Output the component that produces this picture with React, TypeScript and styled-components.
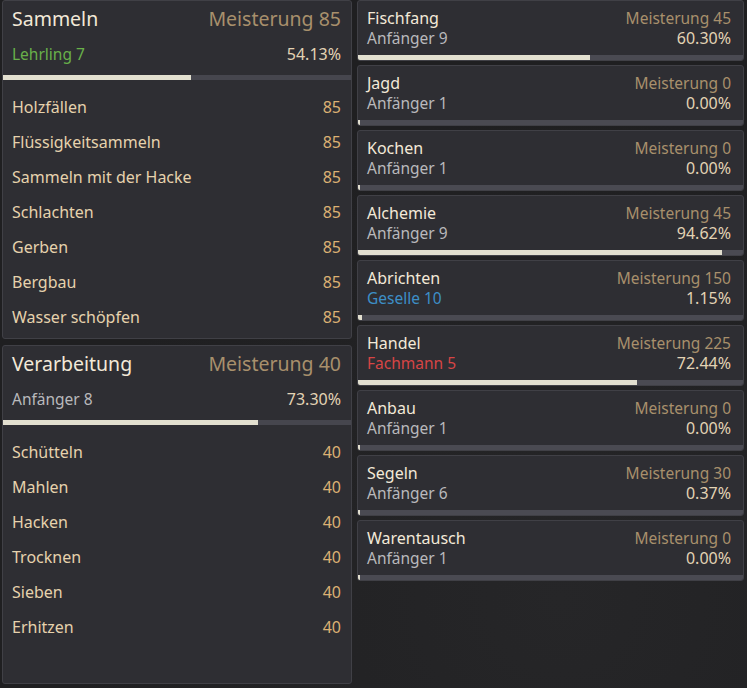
import React from "react";
import styled, { createGlobalStyle } from "styled-components";

const Global = createGlobalStyle`
  html, body { margin: 0; padding: 0; background: #1f1f21; }
  body { font-family: "Noto Sans", "DejaVu Sans", sans-serif; }
`;

const Page = styled.div`
  width: 747px;
  height: 688px;
  box-sizing: border-box;
  padding: 0 3px 0 2px;
  display: flex;
  gap: 5px;
  background: radial-gradient(circle at 560px 600px, #262628 0%, #1f1f21 60%);
  overflow: hidden;
`;

const LeftCol = styled.div`
  width: 350px;
  display: flex;
  flex-direction: column;
  gap: 6px;
`;

const RightCol = styled.div`
  flex: 1;
  display: flex;
  flex-direction: column;
  gap: 4px;
`;

const Panel = styled.div`
  height: 339px;
  box-sizing: border-box;
  background: #2e2e33;
  border: 1px solid #404046;
  border-radius: 3px;
  display: flex;
  flex-direction: column;
`;

const HeadRow = styled.div`
  display: flex;
  justify-content: space-between;
  align-items: center;
  padding: 0 10px 0 9px;
  height: 35px;
`;

const Title = styled.span`
  font-size: 19.5px;
  color: #f3e9d8;
`;

const Mastery = styled.span<{ $size?: number }>`
  font-size: ${(p) => p.$size ?? 19.5}px;
  color: #a8906c;
`;

const SubRow = styled.div`
  display: flex;
  justify-content: space-between;
  align-items: center;
  padding: 0 10px 0 9px;
  height: 35px;
`;

const Rank = styled.span<{ $color: string }>`
  font-size: 15.5px;
  color: ${(p) => p.$color};
`;

const Percent = styled.span`
  font-size: 16px;
  color: #e3d3b4;
`;

const Track = styled.div`
  height: 5px;
  background: #46464e;
  margin-top: 4px;
`;

const Fill = styled.div`
  height: 100%;
  background: #e2dfcf;
`;

const List = styled.div`
  padding-top: 9px;
  display: flex;
  flex-direction: column;
`;

const Item = styled.div`
  height: 35px;
  display: flex;
  justify-content: space-between;
  align-items: center;
  padding: 0 10px 0 9px;
  font-size: 16px;
`;

const ItemName = styled.span`
  color: #e6d2ad;
`;

const ItemValue = styled.span`
  color: #dcb173;
`;

const Card = styled.div`
  height: 61px;
  box-sizing: border-box;
  background: #2e2e33;
  border: 1px solid #404046;
  border-radius: 3px;
  display: flex;
  flex-direction: column;
  overflow: hidden;
`;

const CardBody = styled.div`
  padding: 7px 12px 0 9px;
  display: grid;
  grid-template-columns: 1fr auto;
  grid-auto-rows: 20px;
  align-items: center;
`;

const CardTitle = styled.span`
  font-size: 16px;
  color: #f3e9d8;
`;

const CardRight = styled.span`
  justify-self: end;
`;

const CardTrack = styled.div`
  margin-top: auto;
  height: 5px;
  background: #4a4a52;
`;

const CardFill = styled.div`
  height: 100%;
  min-width: 2px;
  background: #e2dfcf;
`;

const GREY = "#b9b9bc";
const GREEN = "#68b04a";
const BLUE = "#3d8fc7";
const RED = "#d64545";

type Big = {
  title: string;
  mastery: number;
  rank: string;
  rankColor: string;
  pct: number;
  items: [string, number][];
};

const bigPanels: Big[] = [
  {
    title: "Sammeln",
    mastery: 85,
    rank: "Lehrling 7",
    rankColor: GREEN,
    pct: 54.13,
    items: [
      ["Holzfällen", 85],
      ["Flüssigkeitsammeln", 85],
      ["Sammeln mit der Hacke", 85],
      ["Schlachten", 85],
      ["Gerben", 85],
      ["Bergbau", 85],
      ["Wasser schöpfen", 85],
    ],
  },
  {
    title: "Verarbeitung",
    mastery: 40,
    rank: "Anfänger 8",
    rankColor: GREY,
    pct: 73.3,
    items: [
      ["Schütteln", 40],
      ["Mahlen", 40],
      ["Hacken", 40],
      ["Trocknen", 40],
      ["Sieben", 40],
      ["Erhitzen", 40],
    ],
  },
];

type Small = { title: string; mastery: number; rank: string; rankColor: string; pct: number };

const cards: Small[] = [
  { title: "Fischfang", mastery: 45, rank: "Anfänger 9", rankColor: GREY, pct: 60.3 },
  { title: "Jagd", mastery: 0, rank: "Anfänger 1", rankColor: GREY, pct: 0 },
  { title: "Kochen", mastery: 0, rank: "Anfänger 1", rankColor: GREY, pct: 0 },
  { title: "Alchemie", mastery: 45, rank: "Anfänger 9", rankColor: GREY, pct: 94.62 },
  { title: "Abrichten", mastery: 150, rank: "Geselle 10", rankColor: BLUE, pct: 1.15 },
  { title: "Handel", mastery: 225, rank: "Fachmann 5", rankColor: RED, pct: 72.44 },
  { title: "Anbau", mastery: 0, rank: "Anfänger 1", rankColor: GREY, pct: 0 },
  { title: "Segeln", mastery: 30, rank: "Anfänger 6", rankColor: GREY, pct: 0.37 },
  { title: "Warentausch", mastery: 0, rank: "Anfänger 1", rankColor: GREY, pct: 0 },
];

export default function App() {
  return (
    <>
      <Global />
      <Page>
        <LeftCol>
          {bigPanels.map((p) => (
            <Panel key={p.title}>
              <HeadRow>
                <Title>{p.title}</Title>
                <Mastery>Meisterung {p.mastery}</Mastery>
              </HeadRow>
              <SubRow>
                <Rank $color={p.rankColor}>{p.rank}</Rank>
                <Percent>{p.pct.toFixed(2)}%</Percent>
              </SubRow>
              <Track>
                <Fill style={{ width: `${p.pct}%` }} />
              </Track>
              <List>
                {p.items.map(([n, v]) => (
                  <Item key={n}>
                    <ItemName>{n}</ItemName>
                    <ItemValue>{v}</ItemValue>
                  </Item>
                ))}
              </List>
            </Panel>
          ))}
        </LeftCol>
        <RightCol>
          {cards.map((c) => (
            <Card key={c.title}>
              <CardBody>
                <CardTitle>{c.title}</CardTitle>
                <CardRight>
                  <Mastery $size={15.5}>Meisterung {c.mastery}</Mastery>
                </CardRight>
                <Rank $color={c.rankColor}>{c.rank}</Rank>
                <CardRight>
                  <Percent>{c.pct.toFixed(2)}%</Percent>
                </CardRight>
              </CardBody>
              <CardTrack>
                <CardFill style={{ width: `${c.pct}%` }} />
              </CardTrack>
            </Card>
          ))}
        </RightCol>
      </Page>
    </>
  );
}
